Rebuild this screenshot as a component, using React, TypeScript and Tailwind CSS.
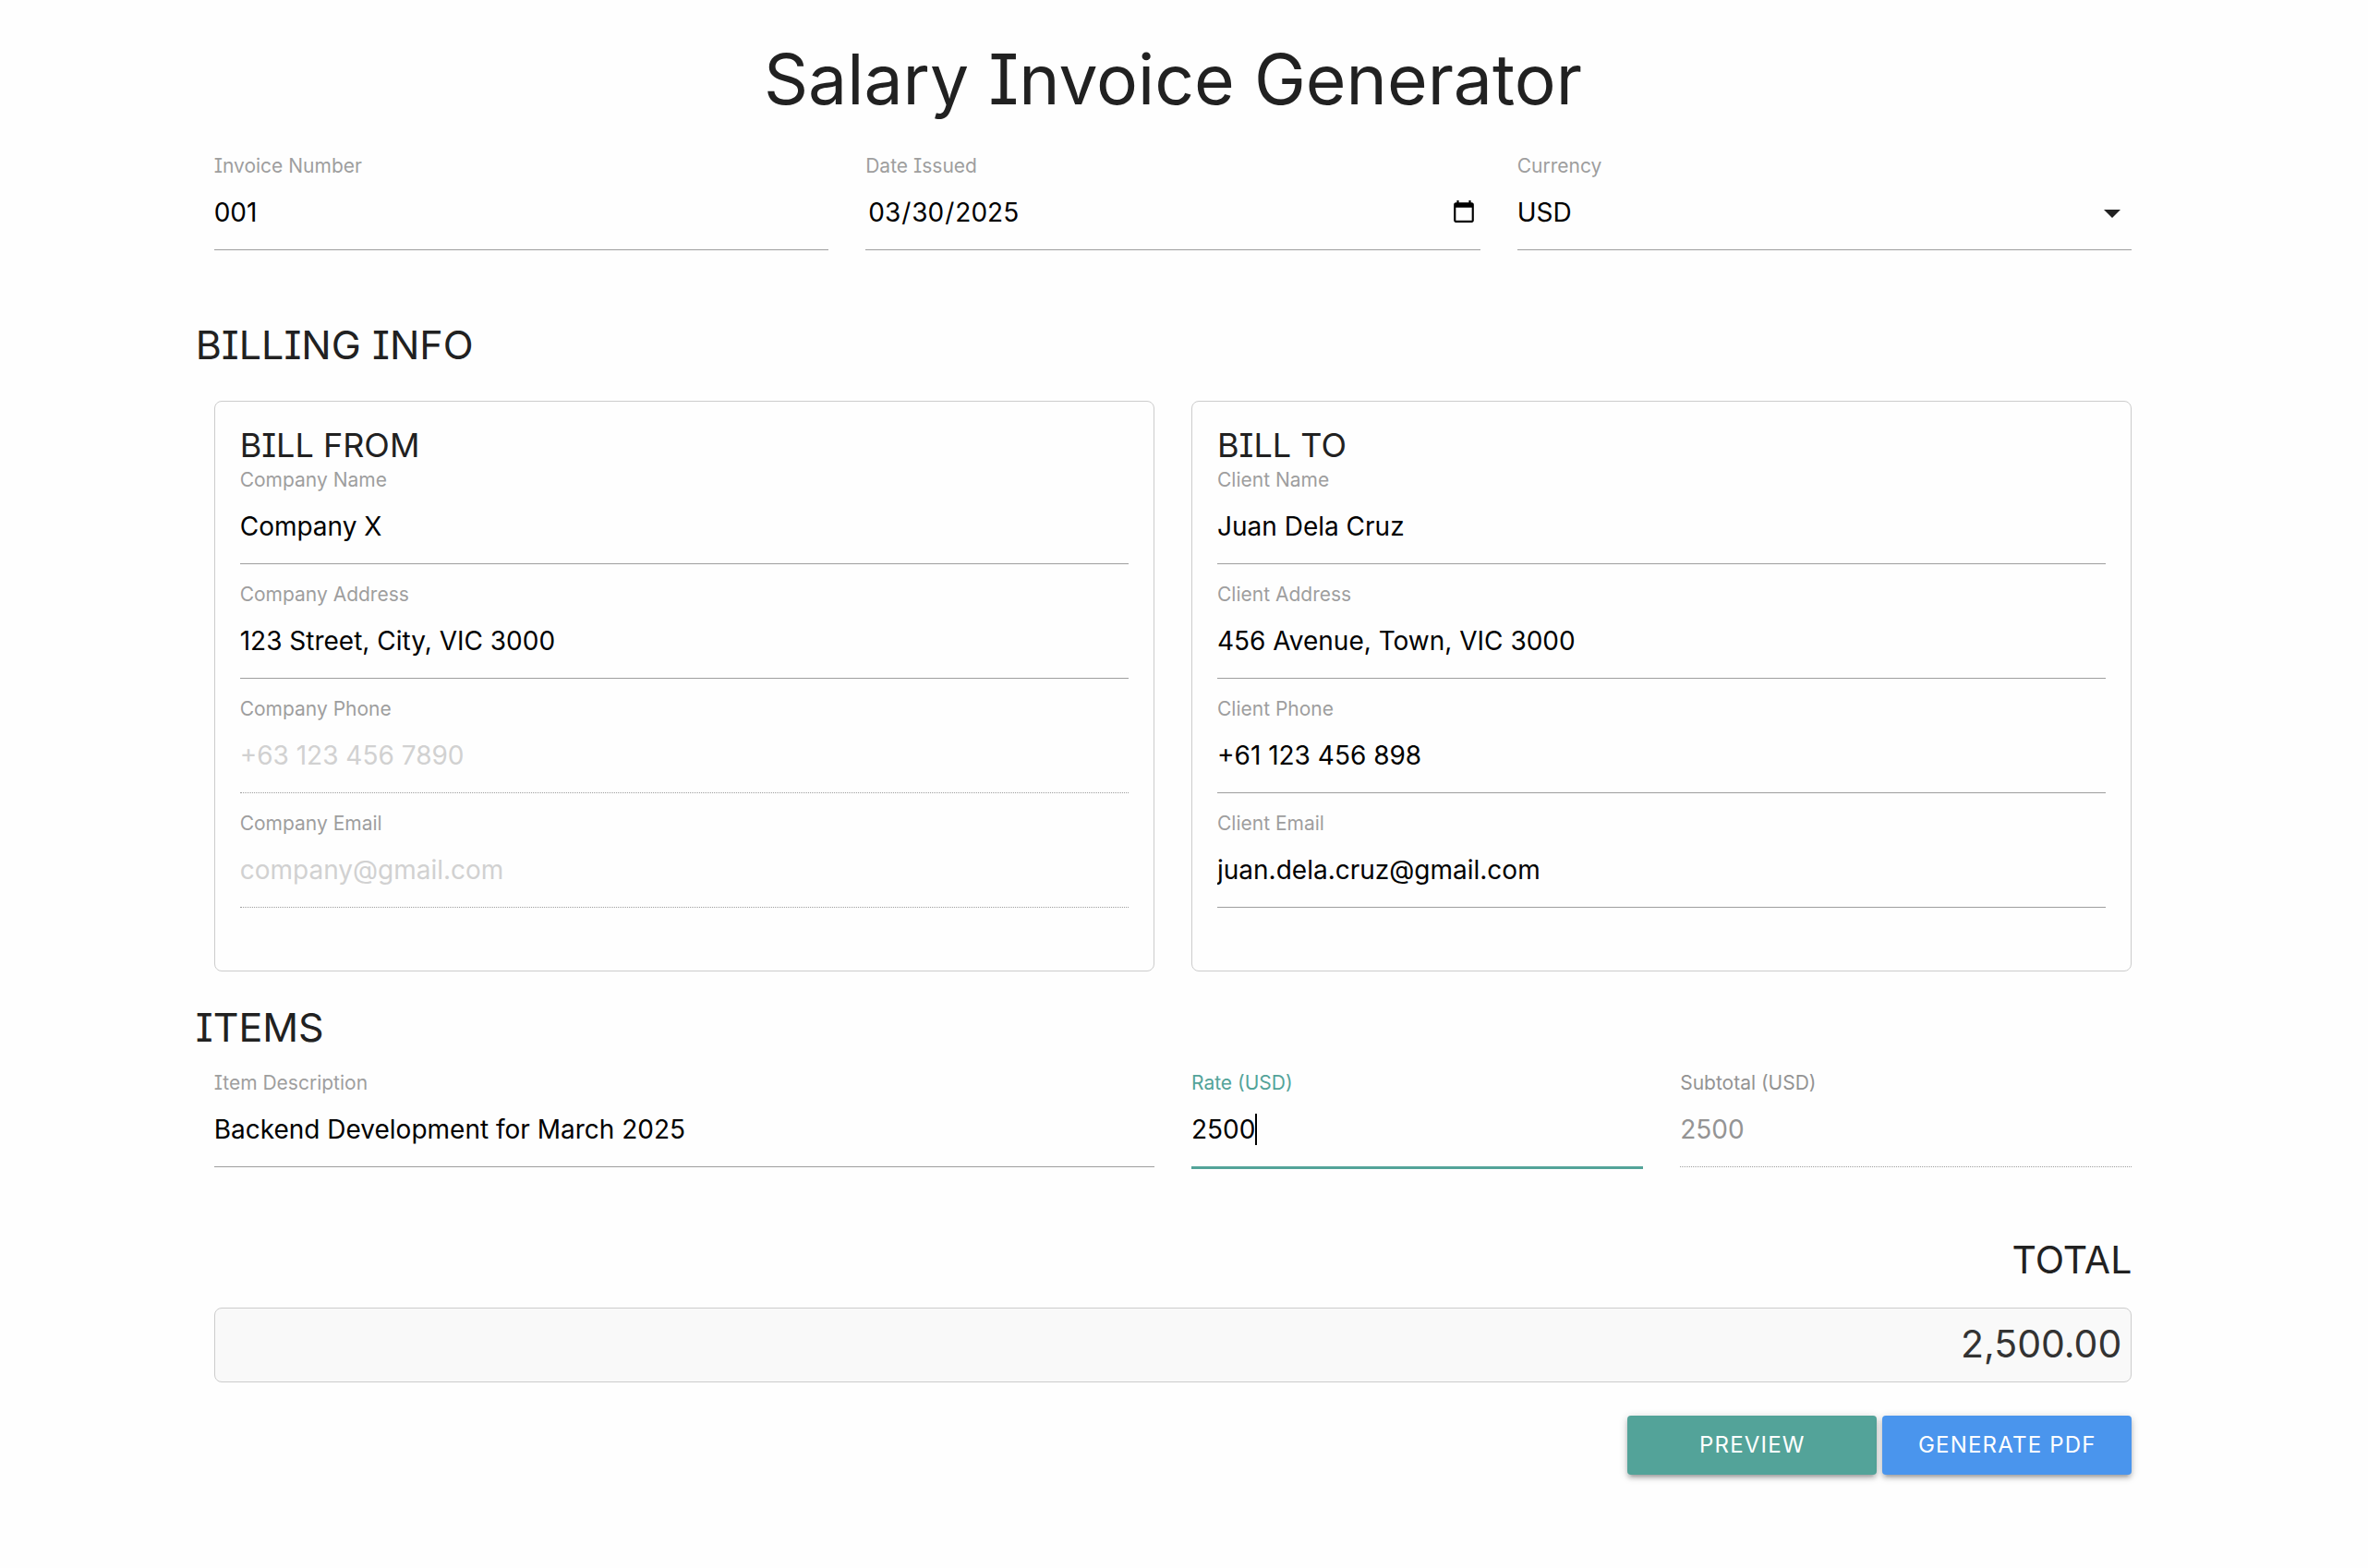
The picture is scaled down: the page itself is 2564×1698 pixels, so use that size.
import { useId, useState } from "react";
import type { ReactNode } from "react";

const labelClass = "block text-[21px] leading-6";
const inputClass =
  "block h-[79px] w-full rounded-none border-b border-[#9e9e9e] bg-transparent pb-0.5 text-[28px] text-black outline-none placeholder:text-[#d1d1d1] placeholder-shown:border-dotted";

type FieldProps = {
  label: string;
  value?: string;
  placeholder?: string;
  type?: string;
};

function Field({ label, value, placeholder, type = "text" }: FieldProps) {
  const id = useId();
  return (
    <div className="mb-[21px]">
      <label htmlFor={id} className={`${labelClass} text-[#9e9e9e]`}>
        {label}
      </label>
      <input id={id} type={type} defaultValue={value} placeholder={placeholder} className={inputClass} />
    </div>
  );
}

function DateField() {
  return (
    <div className="mb-[21px]">
      <label htmlFor="date-issued" className={`${labelClass} text-[#9e9e9e]`}>
        Date Issued
      </label>
      <input id="date-issued" type="date" defaultValue="2025-03-30" className={`${inputClass} px-0.5`} />
    </div>
  );
}

function CurrencyField() {
  return (
    <div className="mb-[21px]">
      <label htmlFor="currency" className={`${labelClass} text-[#9e9e9e]`}>
        Currency
      </label>
      <div className="relative">
        <select id="currency" defaultValue="USD" className={`${inputClass} appearance-none`}>
          <option>USD</option>
          <option>AUD</option>
          <option>PHP</option>
        </select>
        <svg viewBox="0 0 18 9" className="pointer-events-none absolute right-3 top-[35px] h-[9px] w-[18px]" aria-hidden="true">
          <path d="M0 0h18l-9 9z" fill="#212121" />
        </svg>
      </div>
    </div>
  );
}

function RateField({ value, onChange }: { value: string; onChange: (v: string) => void }) {
  return (
    <div className="mb-[21px]">
      <label htmlFor="rate" className={`${labelClass} text-[#53a399]`}>
        Rate (USD)
      </label>
      <div className="relative">
        <input
          id="rate"
          value={value}
          onChange={(e) => onChange(e.target.value)}
          className="block h-[79px] w-full rounded-none border-b border-[#53a399] bg-transparent pb-0.5 text-[28px] text-black caret-transparent shadow-[0_2px_0_0_#53a399] outline-none"
        />
        <div className="pointer-events-none absolute inset-y-0 left-0 flex items-center pb-1" aria-hidden="true">
          <span className="invisible text-[28px]">{value}</span>
          <span className="h-[34px] w-[2px] bg-black" />
        </div>
      </div>
    </div>
  );
}

function SubtotalField({ value }: { value: string }) {
  return (
    <div className="mb-[21px]">
      <label htmlFor="subtotal" className={`${labelClass} text-[#939393]`}>
        Subtotal (USD)
      </label>
      <input
        id="subtotal"
        value={value}
        disabled
        className="block h-[79px] w-full rounded-none border-b border-dotted border-[#9e9e9e] bg-transparent pb-0.5 text-[28px] text-[#949494]"
      />
    </div>
  );
}

function Card({ title, children }: { title: string; children: ReactNode }) {
  return (
    <section className="rounded-lg border border-[#cccccc] px-[27px] pb-[47px] pt-[27px]">
      <h3 className="mb-[6px] text-[36px] leading-[40px]">{title}</h3>
      {children}
    </section>
  );
}

export default function App() {
  const [rate, setRate] = useState("2500");
  const total = Number(rate || 0).toLocaleString("en-US", { minimumFractionDigits: 2 });
  return (
    <div className="min-h-screen bg-[#fefefe] pr-6 font-['Inter',sans-serif] text-[#212121]">
      <main className="mx-auto w-10/12 pt-[42px]">
        <h1 className="mb-[38px] text-center text-[75px] leading-[88px] [font-feature-settings:'cv08']">
          Salary Invoice Generator
        </h1>
        <div className="grid grid-cols-3 gap-10 px-5 [&_label]:[font-feature-settings:'cv08']">
          <Field label="Invoice Number" value="001" />
          <DateField />
          <CurrencyField />
        </div>

        <h2 className="mb-[37px] mt-[57px] text-[43px] leading-[48px] [font-feature-settings:'cv08']">BILLING INFO</h2>
        <div className="grid grid-cols-2 gap-10 px-5 [&_h3]:[font-feature-settings:'cv08']">
          <Card title="BILL FROM">
            <Field label="Company Name" value="Company X" />
            <Field label="Company Address" value="123 Street, City, VIC 3000" />
            <Field label="Company Phone" placeholder="+63 123 456 7890" type="tel" />
            <Field label="Company Email" placeholder="company@gmail.com" type="email" />
          </Card>
          <Card title="BILL TO">
            <Field label="Client Name" value="Juan Dela Cruz" />
            <Field label="Client Address" value="456 Avenue, Town, VIC 3000" />
            <Field label="Client Phone" value="+61 123 456 898" type="tel" />
            <Field label="Client Email" value="juan.dela.cruz@gmail.com" type="email" />
          </Card>
        </div>

        <h2 className="mb-[25px] mt-9 text-[43px] leading-[48px] [font-feature-settings:'cv08']">ITEMS</h2>
        <div className="grid grid-cols-2 gap-10 px-5 [&_label]:[font-feature-settings:'cv08']">
          <Field label="Item Description" value="Backend Development for March 2025" />
          <div className="grid grid-cols-2 gap-10">
            <RateField value={rate} onChange={setRate} />
            <SubtotalField value={rate} />
          </div>
        </div>

        <div className="px-5 text-right">
          <h2 className="mb-7 mt-[55px] text-[41px] leading-[48px]">TOTAL</h2>
          <output className="block rounded-lg border border-[#cccccc] bg-[#f9f9f9] px-[10px] pb-0.5 text-[41px] leading-[77px] text-[#333333]">
            {total}
          </output>
          <div className="mt-9 flex justify-end gap-[6px]">
            <button
              type="button"
              className="h-16 w-[270px] rounded bg-[#53a399] text-[24px] tracking-wider text-white shadow-[0_4px_4px_0_rgba(0,0,0,0.14),0_6px_2px_-4px_rgba(0,0,0,0.12),0_2px_10px_0_rgba(0,0,0,0.2)]"
            >
              PREVIEW
            </button>
            <button
              type="button"
              className="h-16 w-[270px] rounded bg-[#4a95ed] text-[24px] tracking-wider text-white shadow-[0_4px_4px_0_rgba(0,0,0,0.14),0_6px_2px_-4px_rgba(0,0,0,0.12),0_2px_10px_0_rgba(0,0,0,0.2)]"
            >
              GENERATE PDF
            </button>
          </div>
        </div>
      </main>
    </div>
  );
}
